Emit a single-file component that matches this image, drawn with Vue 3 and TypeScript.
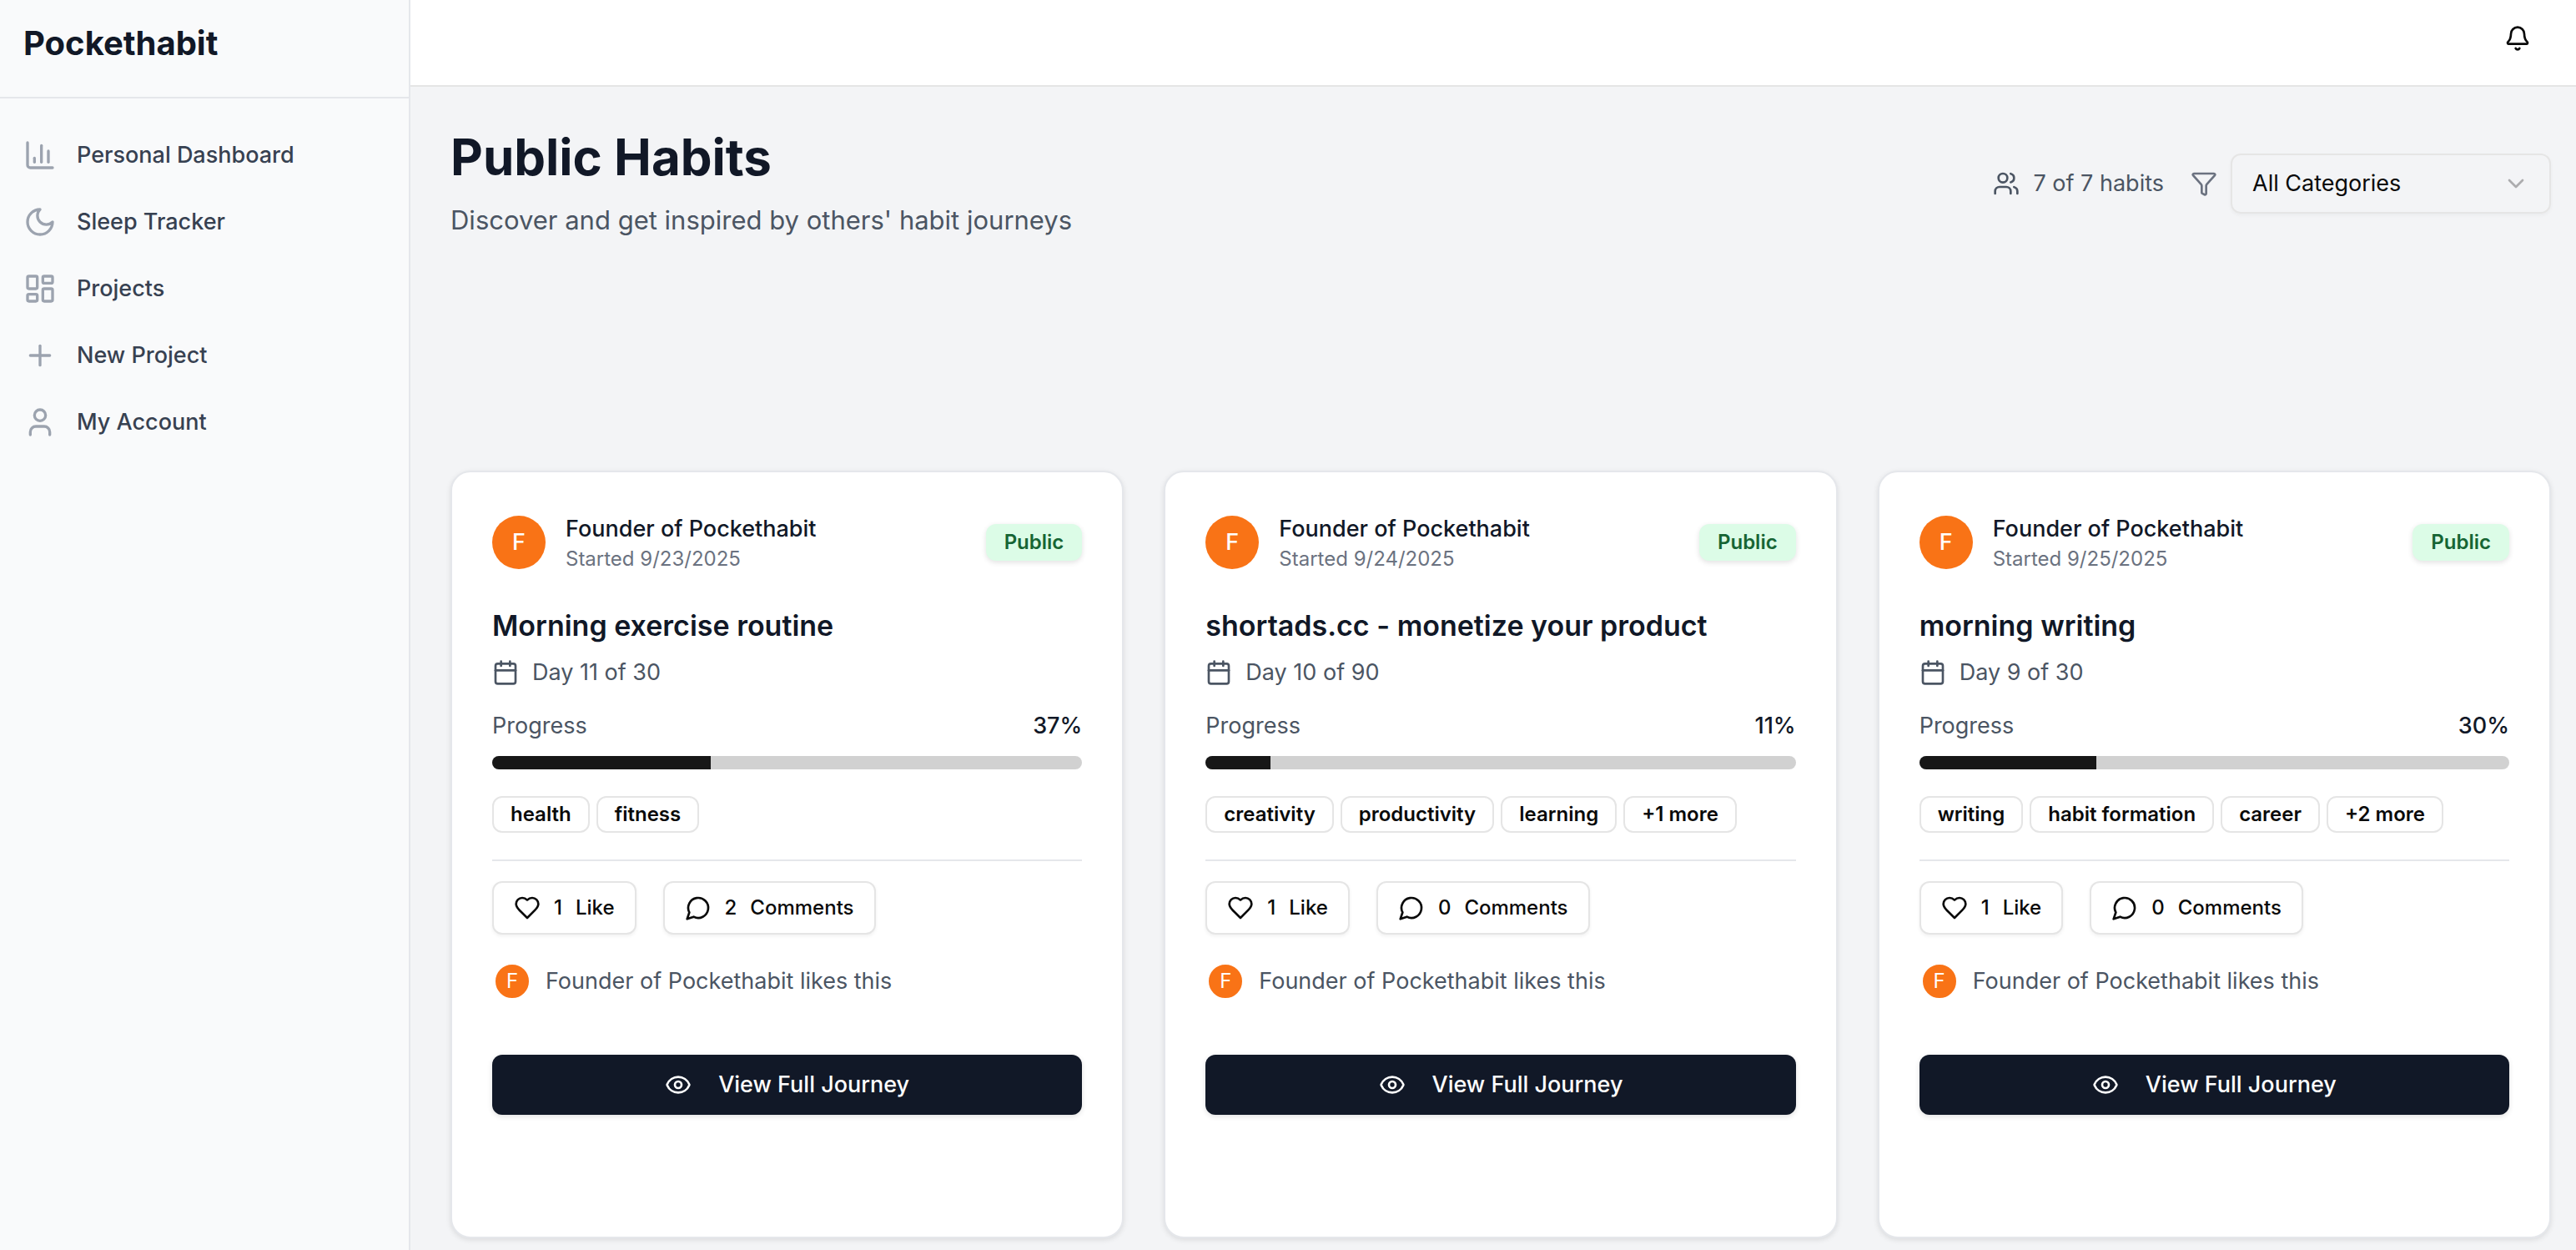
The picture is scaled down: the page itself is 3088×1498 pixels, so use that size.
<script setup lang="ts">
import { h, ref } from 'vue'
import type { FunctionalComponent } from 'vue'

type IconName =
  | 'chart' | 'moon' | 'dashboard' | 'plus' | 'user' | 'bell' | 'users'
  | 'filter' | 'chevron' | 'calendar' | 'heart' | 'comment' | 'eye'

const iconPaths: Record<IconName, string[]> = {
  chart: ['M3 3v16a2 2 0 0 0 2 2h16', 'M18 17V9', 'M13 17V5', 'M8 17v-3'],
  moon: ['M12 3a6 6 0 0 0 9 9 9 9 0 1 1-9-9Z'],
  dashboard: [
    'M4 3h5a1 1 0 0 1 1 1v7a1 1 0 0 1-1 1H4a1 1 0 0 1-1-1V4a1 1 0 0 1 1-1z',
    'M15 3h5a1 1 0 0 1 1 1v3a1 1 0 0 1-1 1h-5a1 1 0 0 1-1-1V4a1 1 0 0 1 1-1z',
    'M15 12h5a1 1 0 0 1 1 1v7a1 1 0 0 1-1 1h-5a1 1 0 0 1-1-1v-7a1 1 0 0 1 1-1z',
    'M4 16h5a1 1 0 0 1 1 1v3a1 1 0 0 1-1 1H4a1 1 0 0 1-1-1v-3a1 1 0 0 1 1-1z',
  ],
  plus: ['M5 12h14', 'M12 5v14'],
  user: ['M19 21v-2a4 4 0 0 0-4-4H9a4 4 0 0 0-4 4v2', 'M16 7a4 4 0 1 1-8 0 4 4 0 0 1 8 0z'],
  bell: [
    'M10.268 21a2 2 0 0 0 3.464 0',
    'M3.262 15.326A1 1 0 0 0 4 17h16a1 1 0 0 0 .74-1.673C19.41 13.956 18 12.499 18 8A6 6 0 0 0 6 8c0 4.499-1.411 5.956-2.738 7.326',
  ],
  users: [
    'M16 21v-2a4 4 0 0 0-4-4H6a4 4 0 0 0-4 4v2',
    'M13 7a4 4 0 1 1-8 0 4 4 0 0 1 8 0z',
    'M16 3.128a4 4 0 0 1 0 7.744',
    'M22 21v-2a4 4 0 0 0-3-3.87',
  ],
  filter: [
    'M10 20a1 1 0 0 0 .553.895l2 1A1 1 0 0 0 14 21v-7a2 2 0 0 1 .517-1.341L21.74 4.67A1 1 0 0 0 21 3H3a1 1 0 0 0-.742 1.67l7.225 7.989A2 2 0 0 1 10 14z',
  ],
  chevron: ['m6 9 6 6 6-6'],
  calendar: [
    'M8 2v4',
    'M16 2v4',
    'M5 4h14a2 2 0 0 1 2 2v14a2 2 0 0 1-2 2H5a2 2 0 0 1-2-2V6a2 2 0 0 1 2-2z',
    'M3 10h18',
  ],
  heart: [
    'M19 14c1.49-1.46 3-3.21 3-5.5A5.5 5.5 0 0 0 16.5 3c-1.76 0-3 .5-4.5 2-1.5-1.5-2.74-2-4.5-2A5.5 5.5 0 0 0 2 8.5c0 2.3 1.5 4.05 3 5.5l7 7Z',
  ],
  comment: ['M7.9 20A9 9 0 1 0 4 16.1L2 22Z'],
  eye: [
    'M2.062 12.348a1 1 0 0 1 0-.696 10.75 10.75 0 0 1 19.876 0 1 1 0 0 1 0 .696 10.75 10.75 0 0 1-19.876 0',
    'M15 12a3 3 0 1 1-6 0 3 3 0 0 1 6 0z',
  ],
}

const Icon: FunctionalComponent<{ name: IconName }> = (props) =>
  h(
    'svg',
    {
      viewBox: '0 0 24 24',
      fill: 'none',
      stroke: 'currentColor',
      'stroke-width': 2,
      'stroke-linecap': 'round',
      'stroke-linejoin': 'round',
      'aria-hidden': 'true',
    },
    iconPaths[props.name].map((d) => h('path', { d })),
  )
Icon.props = ['name']

const navItems: { label: string; icon: IconName }[] = [
  { label: 'Personal Dashboard', icon: 'chart' },
  { label: 'Sleep Tracker', icon: 'moon' },
  { label: 'Projects', icon: 'dashboard' },
  { label: 'New Project', icon: 'plus' },
  { label: 'My Account', icon: 'user' },
]

interface Habit {
  title: string
  started: string
  day: number
  total: number
  percent: number
  tags: string[]
  likes: number
  comments: number
}

const owner = 'Founder of Pockethabit'

const habits: Habit[] = [
  {
    title: 'Morning exercise routine',
    started: '9/23/2025',
    day: 11,
    total: 30,
    percent: 37,
    tags: ['health', 'fitness'],
    likes: 1,
    comments: 2,
  },
  {
    title: 'shortads.cc - monetize your product',
    started: '9/24/2025',
    day: 10,
    total: 90,
    percent: 11,
    tags: ['creativity', 'productivity', 'learning', '+1 more'],
    likes: 1,
    comments: 0,
  },
  {
    title: 'morning writing',
    started: '9/25/2025',
    day: 9,
    total: 30,
    percent: 30,
    tags: ['writing', 'habit formation', 'career', '+2 more'],
    likes: 1,
    comments: 0,
  },
]

const category = ref('All Categories')
</script>

<template>
  <div class="layout">
    <aside class="sidebar">
      <div class="brand">Pockethabit</div>
      <nav class="nav" aria-label="Main">
        <a v-for="item in navItems" :key="item.label" href="#" class="nav-link">
          <Icon :name="item.icon" class="nav-icon" />
          {{ item.label }}
        </a>
      </nav>
    </aside>

    <div class="content">
      <header class="topbar">
        <button type="button" class="bell" aria-label="Notifications">
          <Icon name="bell" class="icon" />
        </button>
      </header>

      <main class="page">
        <div class="page-head">
          <div>
            <h1>Public Habits</h1>
            <p class="subtitle">Discover and get inspired by others' habit journeys</p>
          </div>
          <div class="controls">
            <div class="count">
              <Icon name="users" class="icon" />
              <span>7 of 7 habits</span>
            </div>
            <div class="filter">
              <Icon name="filter" class="icon filter-icon" />
              <div class="select-wrap">
                <select v-model="category" aria-label="Category">
                  <option>All Categories</option>
                </select>
                <Icon name="chevron" class="icon chevron" />
              </div>
            </div>
          </div>
        </div>

        <section class="grid" aria-label="Habits">
          <article v-for="habit in habits" :key="habit.title" class="card">
            <div class="card-head">
              <div class="avatar">F</div>
              <div class="who">
                <div class="name">{{ owner }}</div>
                <div class="started">Started {{ habit.started }}</div>
              </div>
              <span class="badge public">Public</span>
            </div>

            <h2>{{ habit.title }}</h2>
            <div class="day">
              <Icon name="calendar" class="icon" />
              <span>Day {{ habit.day }} of {{ habit.total }}</span>
            </div>

            <div class="progress-row">
              <span>Progress</span>
              <span class="percent">{{ habit.percent }}%</span>
            </div>
            <div
              class="bar"
              role="progressbar"
              aria-label="Progress"
              :aria-valuenow="habit.percent"
              aria-valuemin="0"
              aria-valuemax="100"
            >
              <div class="bar-fill" :style="{ width: habit.percent + '%' }"></div>
            </div>

            <div class="tags">
              <span v-for="tag in habit.tags" :key="tag" class="badge">{{ tag }}</span>
            </div>

            <div class="actions">
              <button type="button" class="action">
                <Icon name="heart" class="icon" />
                <span>{{ habit.likes }}</span>
                <span>Like</span>
              </button>
              <button type="button" class="action">
                <Icon name="comment" class="icon" />
                <span>{{ habit.comments }}</span>
                <span>Comments</span>
              </button>
            </div>

            <div class="liked">
              <div class="avatar small">F</div>
              <span>{{ owner }} likes this</span>
            </div>

            <button type="button" class="view">
              <Icon name="eye" class="icon" />
              <span>View Full Journey</span>
            </button>
          </article>
        </section>
      </main>
    </div>
  </div>
</template>

<style>
body {
  margin: 0;
  background: #f3f4f6;
}
</style>

<style scoped>
.layout {
  display: flex;
  min-height: 100vh;
  font-family: Inter, 'Liberation Sans', sans-serif;
  font-size: 27px;
  line-height: 40px;
  color: #0a0a0a;
  background: #f3f4f6;
}

.layout * {
  box-sizing: border-box;
}

button,
select {
  font: inherit;
  color: inherit;
  cursor: pointer;
}

.icon {
  width: 32px;
  height: 32px;
  flex: none;
}

.sidebar {
  width: 492px;
  flex: none;
  background: #f9fafb;
  border-right: 2px solid #e5e7eb;
}

.brand {
  padding: 24px 28px 36px;
  border-bottom: 2px solid #e5e7eb;
  font-size: 40px;
  line-height: 56px;
  font-weight: 700;
  color: #111827;
}

.nav {
  display: flex;
  flex-direction: column;
  gap: 8px;
  padding-top: 32px;
}

.nav-link {
  display: flex;
  align-items: center;
  gap: 24px;
  height: 72px;
  padding: 0 28px;
  font-weight: 500;
  color: #374151;
  text-decoration: none;
}

.nav-icon {
  width: 40px;
  height: 40px;
  color: #9ca3af;
}

.content {
  flex: 1;
  min-width: 0;
}

.topbar {
  display: flex;
  justify-content: flex-end;
  padding: 14px 38px 24px;
  background: #ffffff;
  border-bottom: 2px solid #e5e5e5;
}

.bell {
  display: flex;
  align-items: center;
  justify-content: center;
  width: 64px;
  height: 64px;
  padding: 0;
  border: 0;
  background: none;
}

.page {
  padding: 48px 30px 0 48px;
}

.page-head {
  display: flex;
  align-items: center;
  justify-content: space-between;
  margin-bottom: 276px;
}

h1 {
  margin: 0 0 16px;
  font-size: 60px;
  line-height: 72px;
  font-weight: 700;
  color: #111827;
}

.subtitle {
  margin: 0;
  font-size: 31px;
  line-height: 48px;
  color: #4b5563;
}

.controls,
.count,
.filter {
  display: flex;
  align-items: center;
}

.controls {
  gap: 32px;
}

.count,
.filter {
  gap: 16px;
  color: #4b5563;
}

.filter-icon {
  color: #6b7280;
}

.select-wrap {
  position: relative;
  width: 384px;
}

select {
  display: block;
  width: 100%;
  height: 72px;
  padding: 0 72px 0 24px;
  border: 2px solid #e5e5e5;
  border-radius: 12px;
  background: transparent;
  box-shadow: 0 2px 4px rgba(0, 0, 0, 0.04);
  color: #0a0a0a;
  appearance: none;
}

.chevron {
  position: absolute;
  top: 20px;
  right: 26px;
  color: #0a0a0a;
  opacity: 0.3;
  pointer-events: none;
}

.grid {
  display: grid;
  grid-template-columns: repeat(3, minmax(0, 1fr));
  gap: 48px;
}

.card {
  padding: 48px 48px 146px;
  border: 2px solid #e5e7eb;
  border-radius: 24px;
  background: #ffffff;
  box-shadow: 0 2px 6px rgba(0, 0, 0, 0.1);
}

.card-head {
  display: flex;
  align-items: center;
  gap: 24px;
}

.avatar {
  display: flex;
  align-items: center;
  justify-content: center;
  flex: none;
  width: 64px;
  height: 64px;
  border-radius: 50%;
  background: #f97316;
  color: #ffffff;
  font-weight: 500;
}

.avatar.small {
  width: 48px;
  height: 48px;
  border: 4px solid #ffffff;
  font-size: 24px;
  font-weight: 400;
}

.who {
  flex: 1;
}

.name {
  font-weight: 500;
  color: #111827;
}

.started {
  font-size: 24px;
  line-height: 32px;
  color: #6b7280;
}

.badge {
  padding: 4px 20px;
  border: 2px solid #e5e5e5;
  border-radius: 12px;
  font-size: 24px;
  line-height: 32px;
  font-weight: 600;
}

.badge.public {
  border-color: transparent;
  background: #dcfce7;
  box-shadow: 0 2px 6px rgba(0, 0, 0, 0.12);
  color: #166534;
}

h2 {
  margin: 40px 0 12px;
  font-size: 34px;
  line-height: 48px;
  font-weight: 600;
  color: #111827;
}

.day {
  display: flex;
  align-items: center;
  gap: 16px;
  color: #4b5563;
}

.progress-row {
  display: flex;
  justify-content: space-between;
  margin: 24px 0 16px;
  color: #4b5563;
}

.percent {
  font-weight: 500;
  color: #111827;
}

.bar {
  height: 16px;
  border-radius: 8px;
  background: #d1d1d1;
  overflow: hidden;
}

.bar-fill {
  height: 100%;
  background: #171717;
}

.tags {
  display: flex;
  flex-wrap: wrap;
  gap: 8px;
  padding: 32px 0;
  border-bottom: 2px solid #e5e7eb;
}

.actions {
  display: flex;
  gap: 32px;
  padding: 24px 0 32px;
}

.action {
  display: flex;
  align-items: center;
  gap: 16px;
  height: 64px;
  padding: 0 24px;
  border: 2px solid #e5e5e5;
  border-radius: 12px;
  background: #ffffff;
  box-shadow: 0 2px 4px rgba(0, 0, 0, 0.06);
  font-size: 24px;
  font-weight: 500;
}

.liked {
  display: flex;
  align-items: center;
  gap: 16px;
  margin-bottom: 64px;
  color: #4b5563;
}

.view {
  display: flex;
  align-items: center;
  justify-content: center;
  gap: 32px;
  width: 100%;
  height: 72px;
  border: 0;
  border-radius: 12px;
  background: #111827;
  box-shadow: 0 2px 6px rgba(0, 0, 0, 0.12);
  color: #ffffff;
  font-weight: 500;
}
</style>
